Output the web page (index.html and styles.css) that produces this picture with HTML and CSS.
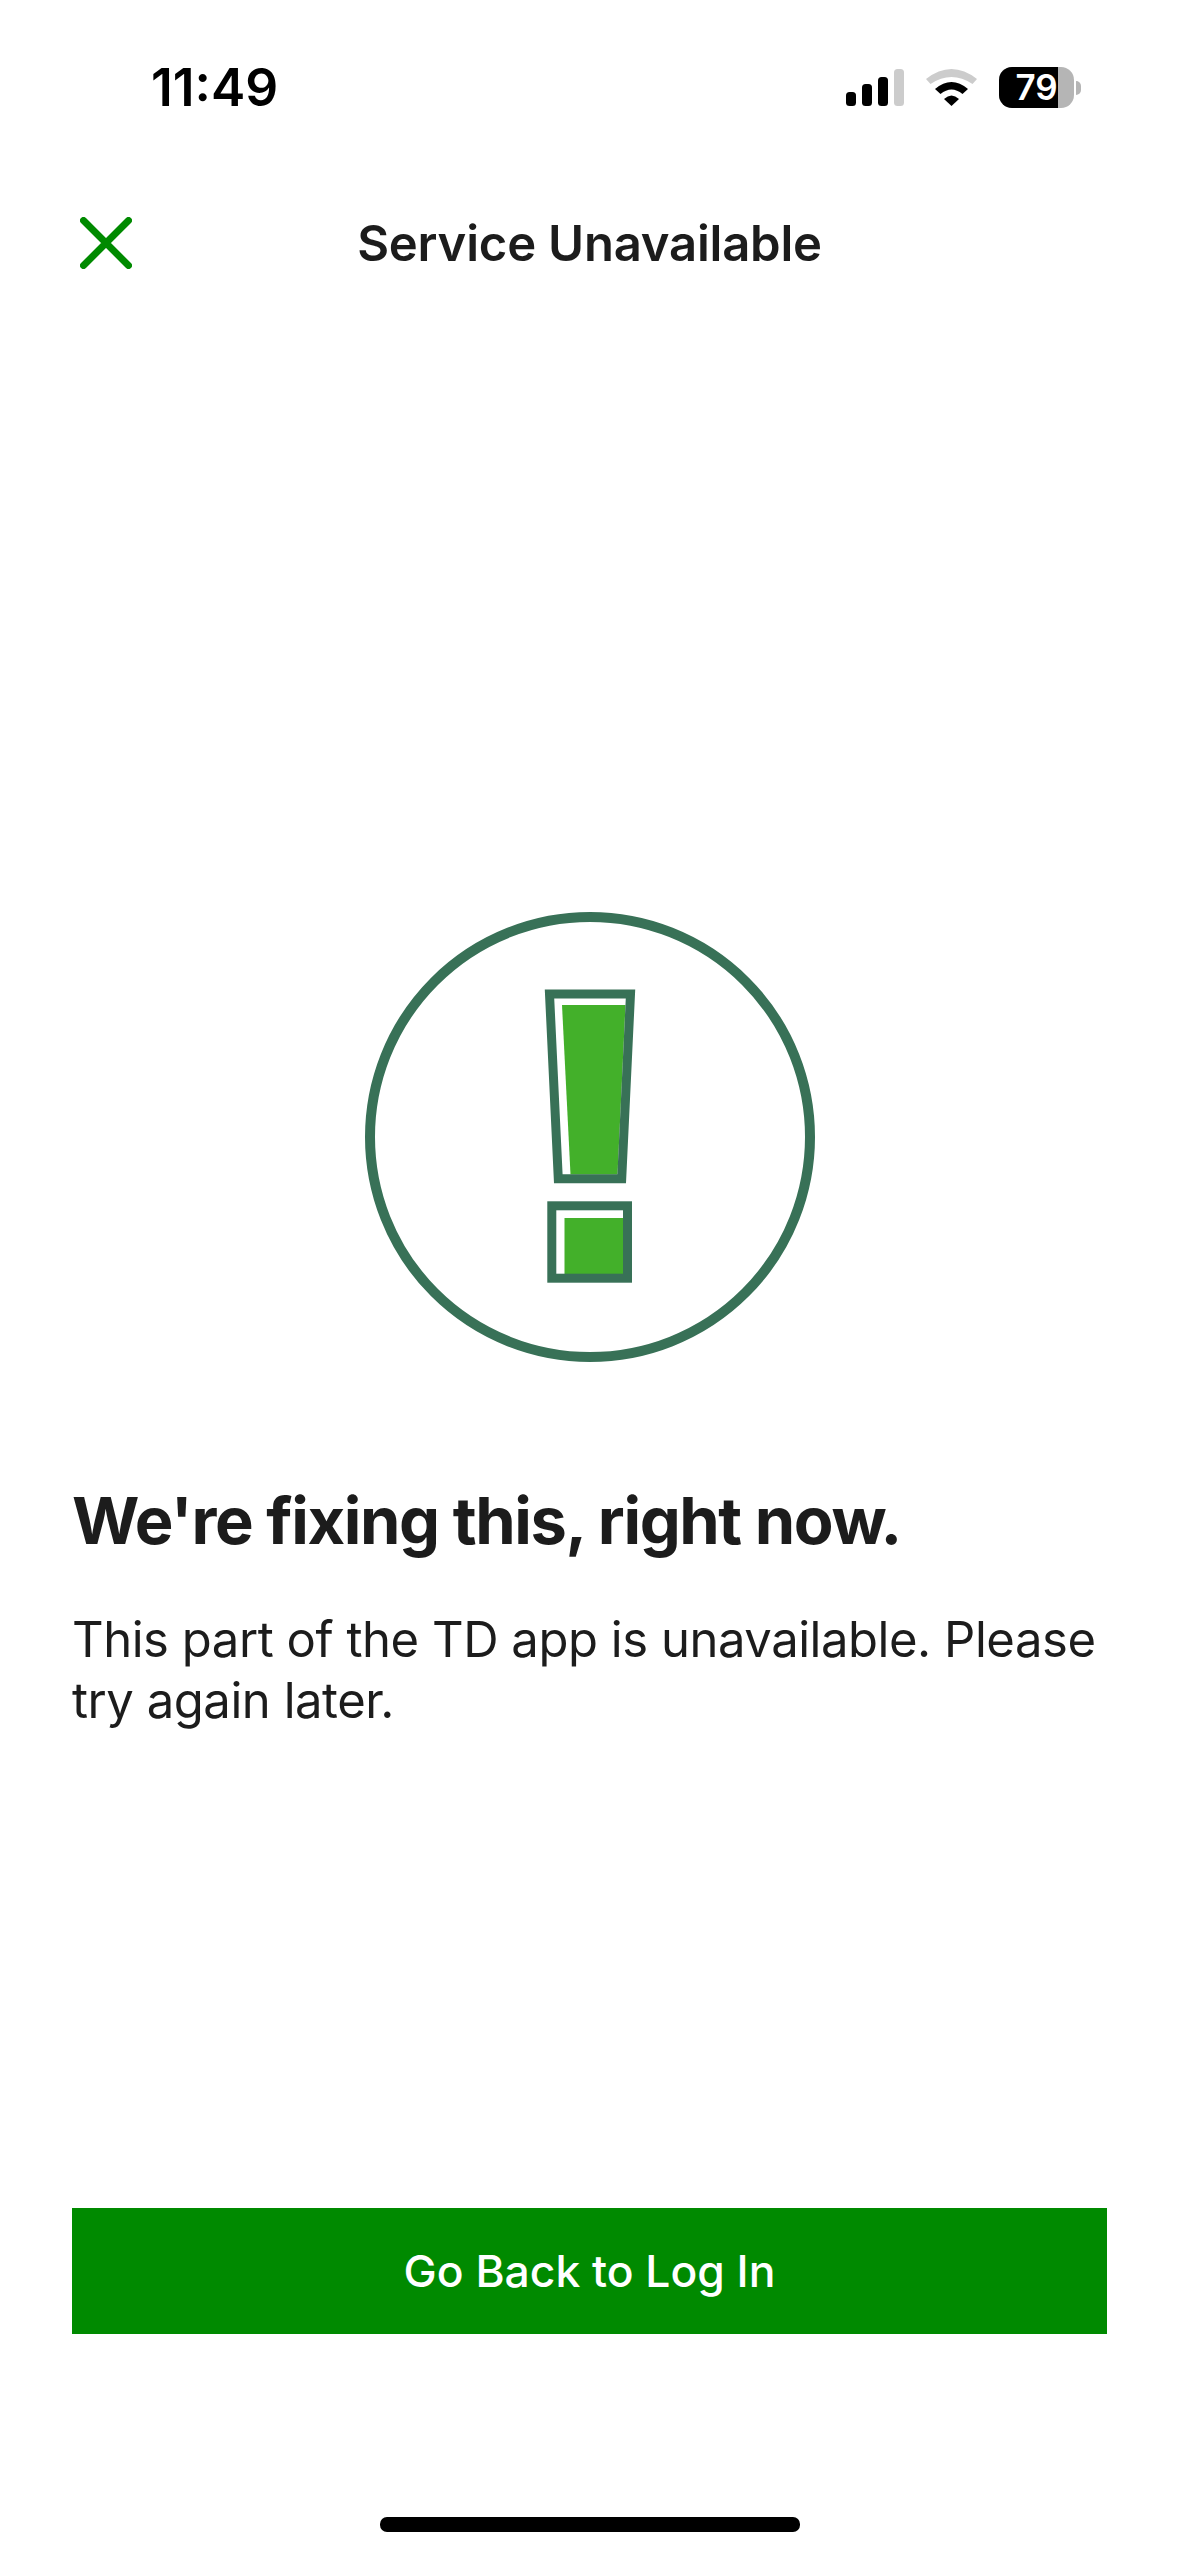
FILE: index.html
```html
<!DOCTYPE html>
<html lang="en">
  <head>
    <meta charset="UTF-8" />
    <meta name="viewport" content="width=device-width, initial-scale=1.0" />
    <title>Service Unavailable</title>
    <link rel="stylesheet" href="styles.css">
  </head>
  <body>
    <div class="screen">
      <!-- iOS status bar -->
      <div class="status-bar">
        <span class="time">11:49</span>
        <div class="status-icons">
          <svg class="signal" width="58" height="38" viewBox="0 0 58 38">
            <rect x="0" y="23" width="10" height="14" rx="3.5" fill="#000" />
            <rect x="16" y="15" width="10" height="22" rx="3.5" fill="#000" />
            <rect x="32" y="8" width="10" height="29" rx="3.5" fill="#000" />
            <rect x="48" y="0" width="10" height="37" rx="3.5" fill="#ccc" />
          </svg>
          <svg class="wifi" width="51" height="38" viewBox="0 0 51 38">
            <path d="M0 10 Q25.5 -10 51 10 L46.5 15 Q25.5 1 4.5 15 Z" fill="#ccc" />
            <path d="M9 20 Q25.5 6 42 20 L36.5 25 Q25.5 16 14.5 25 Z" fill="#000" />
            <path d="M18 30 Q25.5 23 33 30 L25.5 37 Z" fill="#000" />
          </svg>
          <div class="battery">
            <div class="battery-body">
              <div class="battery-fill"></div>
              <span class="battery-level">79</span>
            </div>
            <div class="battery-cap"></div>
          </div>
        </div>
      </div>

      <!-- Nav header -->
      <header class="nav">
        <svg class="close-icon" width="52" height="52" viewBox="0 0 52 52">
          <path d="M3.5 3.5 L48.5 48.5 M48.5 3.5 L3.5 48.5" stroke="#008a00" stroke-width="7" stroke-linecap="round" fill="none" />
        </svg>
        <h1 class="nav-title">Service Unavailable</h1>
      </header>

      <main class="content">
        <div class="alert-icon-wrap">
          <svg class="alert-icon" width="450" height="450" viewBox="365 912 450 450">
            <circle cx="590" cy="1137" r="220" fill="#fff" stroke="#387157" stroke-width="10" />
            <!-- bar -->
            <path d="M562 1005 L625.5 1005 L617.5 1174.5 L570.5 1174.5 Z" fill="#43b02a" />
            <path d="M549.5 994 L630.5 994 L621.7 1178.7 L558.3 1178.7 Z" fill="none" stroke="#387157" stroke-width="9" />
            <!-- dot -->
            <rect x="564.5" y="1218" width="59" height="56" fill="#43b02a" />
            <rect x="551.8" y="1205.8" width="75.7" height="72.4" fill="none" stroke="#387157" stroke-width="9" />
          </svg>
        </div>
        <h2 class="headline">We're fixing this, right now.</h2>
        <p class="message">This part of the TD app is unavailable. Please try again later.</p>
      </main>

      <div class="actions">
        <button type="button" class="back-btn">Go Back to Log In</button>
      </div>

      <div class="home-row">
        <div class="home-indicator"></div>
      </div>
    </div>
  </body>
</html>
```

FILE: styles.css
```css
* {
  margin: 0;
  padding: 0;
  box-sizing: border-box;
}

body {
  font-family: Inter, "Liberation Sans", sans-serif;
  background-color: #fff;
  color: #1c1c1c;
}

.screen {
  width: 1179px;
  height: 2556px;
  display: flex;
  flex-direction: column;
}

.status-bar {
  height: 175px;
  padding: 57px 98px 0 151px;
  display: flex;
  justify-content: space-between;
  align-items: flex-start;
}

.time {
  font-size: 51.5px;
  line-height: 60px;
  font-weight: 600;
  color: #000;
}

.status-icons {
  display: flex;
  align-items: flex-start;
  gap: 22px;
  padding-top: 12px;
}

.signal,
.wifi {
  display: block;
}

.battery {
  display: flex;
  align-items: center;
  gap: 2px;
  margin-top: -2px;
}

.battery-body {
  position: relative;
  width: 75px;
  height: 41px;
  border-radius: 13px;
  overflow: hidden;
  background-color: #b5b5b5;
  display: flex;
  align-items: center;
  justify-content: center;
}

.battery-fill {
  position: absolute;
  left: 0;
  top: 0;
  bottom: 0;
  width: 79%;
  background-color: #000;
}

.battery-level {
  position: relative;
  font-size: 35px;
  font-weight: 600;
  color: #fff;
  line-height: 1;
}

.battery-cap {
  width: 5px;
  height: 14px;
  border-radius: 0 7px 7px 0;
  background-color: #b5b5b5;
}

.nav {
  position: relative;
  height: 136px;
  display: flex;
  align-items: center;
  justify-content: center;
}

.close-icon {
  position: absolute;
  left: 80px;
  top: 42px;
}

.nav-title {
  font-size: 49px;
  line-height: 62px;
  font-weight: 600;
  letter-spacing: -0.2px;
  padding-top: 2px;
}

.content {
  flex: 1;
  padding: 0 72px;
}

.alert-icon-wrap {
  display: flex;
  justify-content: center;
  padding-top: 601px;
  margin-bottom: 119px;
}

.alert-icon {
  display: block;
}

.headline {
  font-size: 65px;
  line-height: 80px;
  font-weight: 700;
  letter-spacing: -1.4px;
  margin-bottom: 48px;
}

.message {
  font-size: 49px;
  line-height: 61px;
  font-weight: 400;
  letter-spacing: -0.46px;
}

.actions {
  padding: 0 72px;
}

.back-btn {
  width: 100%;
  height: 126px;
  border: none;
  background-color: #008a00;
  color: #fff;
  font-family: inherit;
  font-size: 44.4px;
  font-weight: 550;
}

.home-row {
  height: 222px;
  display: flex;
  justify-content: center;
  align-items: flex-end;
  padding-bottom: 24px;
}

.home-indicator {
  width: 420px;
  height: 15px;
  border-radius: 7px;
  background-color: #000;
}
```
